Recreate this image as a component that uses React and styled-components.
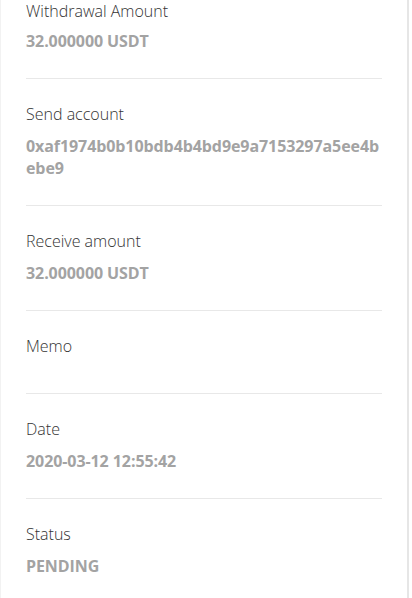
import React from 'react'
import styled, { createGlobalStyle } from 'styled-components'

const GlobalStyle = createGlobalStyle`
  html, body {
    margin: 0;
    padding: 0;
    background: #ffffff;
    font-family: "Open Sans", "Noto Sans", sans-serif;
    overflow: hidden;
  }
`

const Card = styled.div`
  width: 406px;
  height: 598px;
  overflow: hidden;
  border-left: 1px solid #f2f2f2;
  border-right: 2px solid #e6e6e6;
  background: #ffffff;
`

const List = styled.div`
  padding: 0 25px;
`

const Label = styled.div`
  font-size: 16px;
  font-weight: 300;
  line-height: 22px;
  color: #333333;
  margin-bottom: 10px;
`

const Value = styled.div`
  font-size: 16px;
  font-weight: 700;
  line-height: 22px;
  letter-spacing: -0.08px;
  color: #a3a3a3;
  word-break: break-all;
`

const Section = styled.div`
  padding: 24px 0 26px;
  border-bottom: 1px solid #e8e8e8;

  &:first-child {
    padding-top: 0;
  }

  &:first-child ${Label} {
    margin-bottom: 8px;
  }
`

const rows = [
  { label: 'Withdrawal Amount', value: '32.000000 USDT' },
  { label: 'Send account', value: '0xaf1974b0b10bdb4b4bd9e9a7153297a5ee4bebe9' },
  { label: 'Receive amount', value: '32.000000 USDT' },
  { label: 'Memo', value: '' },
  { label: 'Date', value: '2020-03-12 12:55:42' },
  { label: 'Status', value: 'PENDING' },
]

const App = () => (
  <>
    <GlobalStyle />
    <Card>
      <List>
        {rows.map(row => (
          <Section key={row.label}>
            <Label>{row.label}</Label>
            <Value>{row.value}</Value>
          </Section>
        ))}
      </List>
    </Card>
  </>
)

export default App
